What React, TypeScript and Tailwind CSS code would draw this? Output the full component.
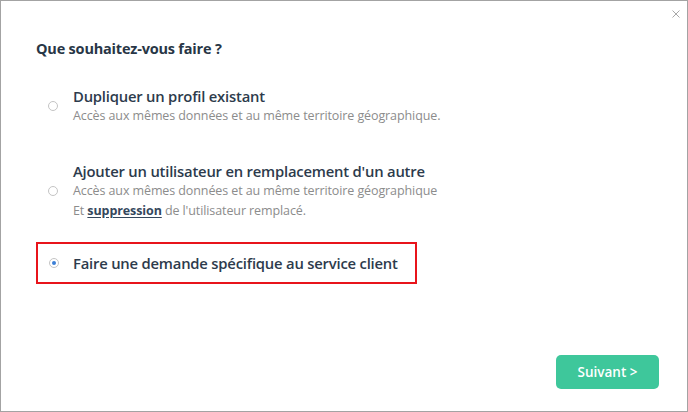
import { useState } from "react";

const options = [
  {
    id: "dup",
    title: "Dupliquer un profil existant",
    lines: [<>Accès aux mêmes données et au même territoire géographique.</>],
  },
  {
    id: "repl",
    title: "Ajouter un utilisateur en remplacement d'un autre",
    lines: [
      <>Accès aux mêmes données et au même territoire géographique</>,
      <>
        Et{" "}
        <span className="font-bold text-[#34475c] underline underline-offset-2">suppression</span>{" "}
        de l'utilisateur remplacé.
      </>,
    ],
  },
];

function Radio({ checked }: { checked: boolean }) {
  return (
    <span className="flex h-[10px] w-[10px] shrink-0 items-center justify-center rounded-full border border-[#c4c4c4] bg-white">
      {checked && <span className="h-[4px] w-[4px] rounded-full bg-[#3b7fd6]" />}
    </span>
  );
}

export default function App() {
  const [choice, setChoice] = useState("spec");

  return (
    <div
      className="relative h-[412px] w-[688px] border border-[#a3a3a3] bg-white"
      style={{ fontFamily: '"Open Sans", "Noto Sans", sans-serif' }}
    >
      {/* close */}
      <button className="absolute right-[7px] top-[9px] text-[#a8a8a8]">
        <svg width="8" height="8" viewBox="0 0 8 8">
          <path d="M0.5 0.5 L7.5 7.5 M7.5 0.5 L0.5 7.5" stroke="currentColor" strokeWidth="1" />
        </svg>
      </button>

      <div className="pl-[35px] pt-[38px]">
        <h2 className="text-[14.5px] font-bold leading-5 tracking-[-0.2px] text-[#283646]">
          Que souhaitez-vous faire ?
        </h2>

        <div className="mt-[27px] flex flex-col gap-[35px]">
          {options.map((o) => (
            <label
              key={o.id}
              onClick={() => setChoice(o.id)}
              className="flex cursor-pointer items-center"
            >
              <span className="flex w-[37px] justify-center pr-[10px] pl-[6px]">
                <Radio checked={choice === o.id} />
              </span>
              <span className="flex flex-col">
                <span className="text-[14.8px] font-semibold leading-5 tracking-[-0.2px] text-[#2d3b4c]">
                  {o.title}
                </span>
                {o.lines.map((l, i) => (
                  <span key={i} className="text-[12.5px] leading-5 tracking-[-0.1px] text-[#8c8c8c]">
                    {l}
                  </span>
                ))}
              </span>
            </label>
          ))}
        </div>

        {/* selected option */}
        <div className="mt-[21px] w-fit border-2 border-[#e8141b] py-[9px] pr-[17px]">
          <label onClick={() => setChoice("spec")} className="flex cursor-pointer items-center">
            <span className="flex w-[35px] justify-center pr-[8px] pl-[4px]">
              <Radio checked={choice === "spec"} />
            </span>
            <span className="text-[14.8px] font-semibold leading-5 tracking-[-0.2px] text-[#2d3b4c]">
              Faire une demande spécifique au service client
            </span>
          </label>
        </div>
      </div>

      {/* footer */}
      <div className="absolute bottom-[22px] right-[28px]">
        <button className="h-[34px] w-[103px] rounded-[5px] bg-[#3ec79b] text-[13.5px] font-semibold text-white">
          Suivant &gt;
        </button>
      </div>
    </div>
  );
}
